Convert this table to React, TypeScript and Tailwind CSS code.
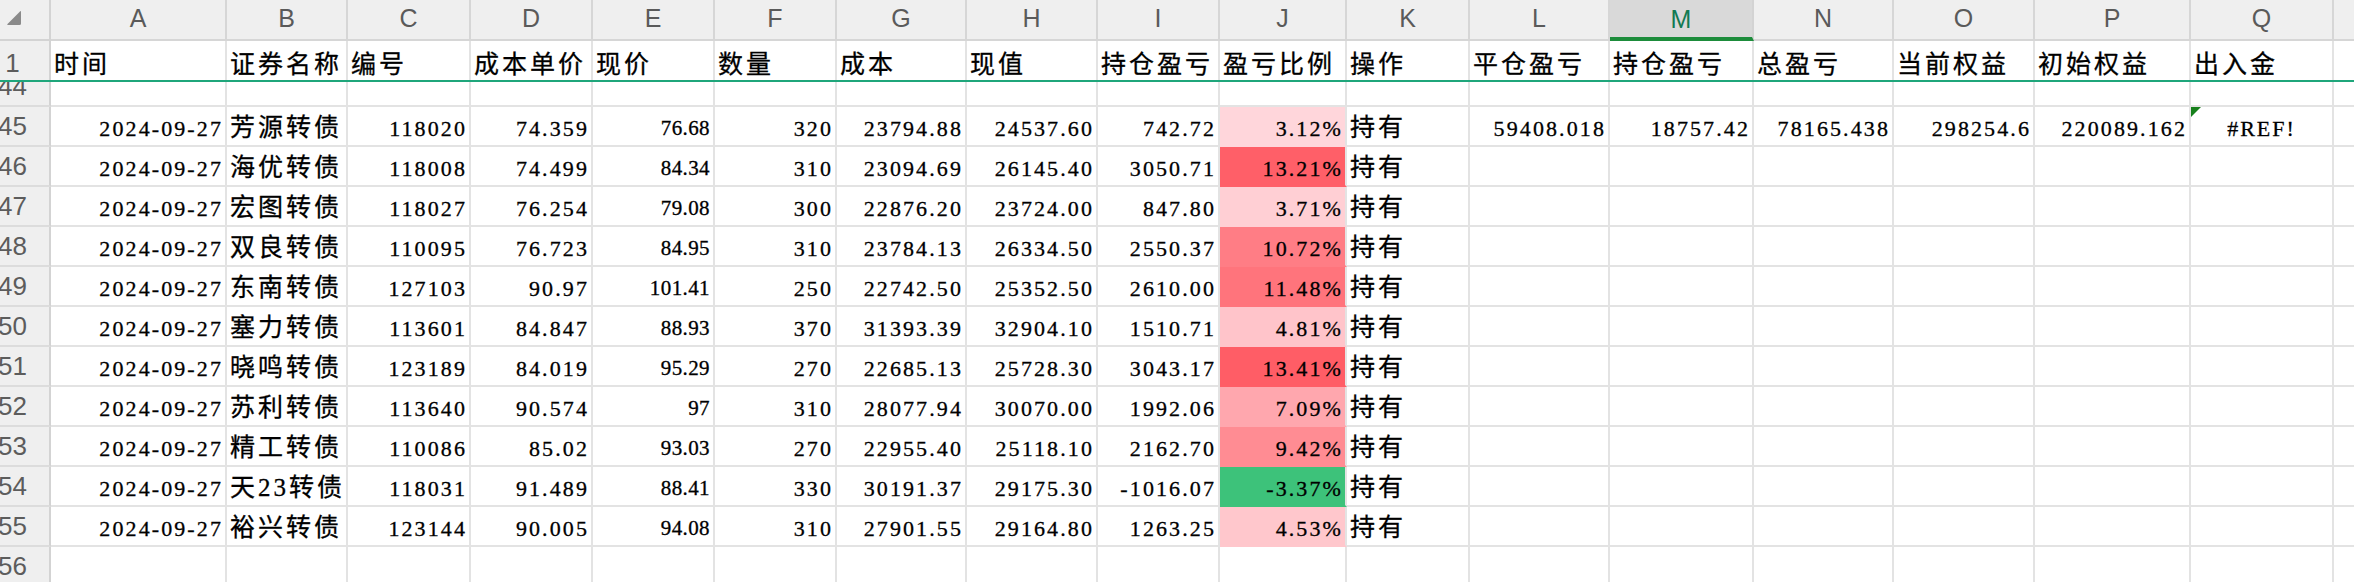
import React from "react";

const W = [
  "w-[51px]",
  "w-[176px]",
  "w-[121px]",
  "w-[123px]",
  "w-[122px]",
  "w-[122px]",
  "w-[122px]",
  "w-[130px]",
  "w-[131px]",
  "w-[122px]",
  "w-[127px]",
  "w-[123px]",
  "w-[140px]",
  "w-[144px]",
  "w-[140px]",
  "w-[141px]",
  "w-[156px]",
  "w-[143px]",
  "w-[40px]",
];

const LETTERS = ["A", "B", "C", "D", "E", "F", "G", "H", "I", "J", "K", "L", "M", "N", "O", "P", "Q", ""];

const HEADERS = [
  "时间",
  "证券名称",
  "编号",
  "成本单价",
  "现价",
  "数量",
  "成本",
  "现值",
  "持仓盈亏",
  "盈亏比例",
  "操作",
  "平仓盈亏",
  "持仓盈亏",
  "总盈亏",
  "当前权益",
  "初始权益",
  "出入金",
  "",
];

type Row = { n: number; d: string[]; bg: string };

const ROWS: Row[] = [
  { n: 45, d: ["2024-09-27", "芳源转债", "118020", "74.359", "76.68", "320", "23794.88", "24537.60", "742.72", "3.12%", "持有"], bg: "bg-[#ffd6db] border-b-[#ffd6db]" },
  { n: 46, d: ["2024-09-27", "海优转债", "118008", "74.499", "84.34", "310", "23094.69", "26145.40", "3050.71", "13.21%", "持有"], bg: "bg-[#ff5f68] border-b-[#ff5f68]" },
  { n: 47, d: ["2024-09-27", "宏图转债", "118027", "76.254", "79.08", "300", "22876.20", "23724.00", "847.80", "3.71%", "持有"], bg: "bg-[#ffcfd4] border-b-[#ffcfd4]" },
  { n: 48, d: ["2024-09-27", "双良转债", "110095", "76.723", "84.95", "310", "23784.13", "26334.50", "2550.37", "10.72%", "持有"], bg: "bg-[#ff7d85] border-b-[#ff7d85]" },
  { n: 49, d: ["2024-09-27", "东南转债", "127103", "90.97", "101.41", "250", "22742.50", "25352.50", "2610.00", "11.48%", "持有"], bg: "bg-[#ff747c] border-b-[#ff747c]" },
  { n: 50, d: ["2024-09-27", "塞力转债", "113601", "84.847", "88.93", "370", "31393.39", "32904.10", "1510.71", "4.81%", "持有"], bg: "bg-[#ffc4ca] border-b-[#ffc4ca]" },
  { n: 51, d: ["2024-09-27", "晓鸣转债", "123189", "84.019", "95.29", "270", "22685.13", "25728.30", "3043.17", "13.41%", "持有"], bg: "bg-[#ff5d66] border-b-[#ff5d66]" },
  { n: 52, d: ["2024-09-27", "苏利转债", "113640", "90.574", "97", "310", "28077.94", "30070.00", "1992.06", "7.09%", "持有"], bg: "bg-[#ffa7ae] border-b-[#ffa7ae]" },
  { n: 53, d: ["2024-09-27", "精工转债", "110086", "85.02", "93.03", "270", "22955.40", "25118.10", "2162.70", "9.42%", "持有"], bg: "bg-[#ff8c93] border-b-[#ff8c93]" },
  { n: 54, d: ["2024-09-27", "天23转债", "118031", "91.489", "88.41", "330", "30191.37", "29175.30", "-1016.07", "-3.37%", "持有"], bg: "bg-[#3dc27a] border-b-[#3dc27a]" },
  { n: 55, d: ["2024-09-27", "裕兴转债", "123144", "90.005", "94.08", "310", "27901.55", "29164.80", "1263.25", "4.53%", "持有"], bg: "bg-[#ffc7cc] border-b-[#ffc7cc]" },
];

const EXTRA = ["59408.018", "18757.42", "78165.438", "298254.6", "220089.162"];

const serif = "font-['Liberation_Serif','Noto_Sans_CJK_SC',serif] text-black [-webkit-text-stroke:0.3px_#000]";
const num = "text-[22px] tracking-[2.1px] justify-end pr-[2px] pt-[5px]";
const numE = "text-[21px] tracking-[0.4px] justify-end pr-[3px] pt-[5px]";
const cjk = "text-[25px] tracking-[3px] justify-start pl-[3px] pt-[2px]";
const grid = "border-r-2 border-b-2 border-[#e3e3e3]";

function RowHead({ n }: { n: number | string }) {
  return (
    <div className={`${W[0]} shrink-0 h-full bg-[#efefef] border-r-2 border-b-2 border-r-[#d3d3d3] border-b-[#dcdcdc] relative`}>
      <div className="absolute left-0 top-0 h-full w-[25px] flex items-center justify-center overflow-visible">
        <span className="font-['Liberation_Sans',Arial,sans-serif] text-[26px] leading-none text-[#5c5c5c] whitespace-nowrap">{n}</span>
      </div>
    </div>
  );
}

function EmptyCell({ i, cls = "" }: { i: number; cls?: string }) {
  return <div className={`${W[i]} shrink-0 h-full ${grid} ${cls}`} />;
}

export default function App() {
  return (
    <div className="w-[2354px] h-[582px] overflow-hidden bg-white">
      {/* column letters */}
      <div className="flex h-[41px]">
        <div className={`${W[0]} shrink-0 h-full bg-[#efefef] border-r-2 border-b-2 border-[#d3d3d3] relative`}>
          <svg className="absolute left-[5px] top-[9px]" width="17" height="17" viewBox="0 0 17 17">
            <path d="M15 2.5 Q16 1.5 16 3 L16 14.5 Q16 16 14.5 16 L3 16 Q1.5 16 2.5 15 Z" fill="#8a8a8a" />
          </svg>
        </div>
        {LETTERS.map((l, i) => {
          const active = l === "M";
          return (
            <div
              key={i}
              className={
                active
                  ? `${W[i + 1]} shrink-0 h-full bg-[#d9d9d9] border-r-2 border-r-[#d3d3d3] border-b-4 border-b-[#1d8c3b] flex items-center justify-center pt-[1px]`
                  : `${W[i + 1]} shrink-0 h-full bg-[#efefef] border-r-2 border-b-2 border-[#d6d6d6] flex items-center justify-center pb-[3px]`
              }
            >
              <span
                className={
                  active
                    ? "font-['Liberation_Sans',Arial,sans-serif] text-[25px] leading-none text-[#127a52]"
                    : "font-['Liberation_Sans',Arial,sans-serif] text-[25px] leading-none text-[#5a5a5a]"
                }
              >
                {l}
              </span>
            </div>
          );
        })}
      </div>

      {/* row 1 headers */}
      <div className="flex h-[39px]">
        <div className={`${W[0]} shrink-0 h-full bg-[#efefef] border-r-2 border-r-[#d3d3d3] relative`}>
          <div className="absolute left-0 top-0 h-full w-[25px] flex items-center justify-center pt-[4px]">
            <span className="font-['Liberation_Sans',Arial,sans-serif] text-[26px] leading-none text-[#5c5c5c]">1</span>
          </div>
        </div>
        {HEADERS.map((h, i) => (
          <div key={i} className={`${W[i + 1]} shrink-0 h-full border-r-2 border-[#e3e3e3] flex items-center ${serif} text-[25px] tracking-[3px] leading-none justify-start pl-[3px] pt-[7px] whitespace-nowrap overflow-hidden`}>
            {h}
          </div>
        ))}
      </div>

      {/* frozen pane divider */}
      <div className="h-[2px] bg-[#1fa67b]" />

      {/* row 44 partially hidden */}
      <div className="h-[25px] overflow-hidden">
        <div className="flex h-[40px] mt-[-15px]">
          <RowHead n={44} />
          {LETTERS.map((_, i) => (
            <EmptyCell key={i} i={i + 1} />
          ))}
        </div>
      </div>

      {/* data rows */}
      {ROWS.map((r, ri) => (
        <div key={r.n} className="flex h-[40px]">
          <RowHead n={r.n} />
          {r.d.map((v, i) => {
            const isCjk = i === 1 || i === 10;
            if (i === 9) {
              return (
                <div key={i} className={`${W[i + 1]} shrink-0 h-full border-r-2 border-b-2 border-r-[#e3e3e3] ${r.bg} flex items-center ${serif} ${num} leading-none whitespace-nowrap`}>
                  {v}
                </div>
              );
            }
            const style = isCjk ? cjk : i === 4 ? numE : num;
            return (
              <div key={i} className={`${W[i + 1]} shrink-0 h-full ${grid} flex items-center ${serif} ${style} leading-none whitespace-nowrap`}>
                {v}
              </div>
            );
          })}
          {ri === 0 ? (
            <>
              {EXTRA.map((v, k) => (
                <div key={k} className={`${W[12 + k]} shrink-0 h-full ${grid} flex items-center ${serif} ${num} leading-none whitespace-nowrap`}>
                  {v}
                </div>
              ))}
              <div className={`${W[17]} shrink-0 h-full ${grid} relative flex items-center justify-center ${serif} text-[22px] tracking-[2px] leading-none pt-[5px]`}>
                <div className="absolute left-0 top-0 w-0 h-0 border-t-[10px] border-t-[#17801c] border-r-[10px] border-r-transparent" />
                #REF!
              </div>
              <EmptyCell i={18} />
            </>
          ) : (
            [12, 13, 14, 15, 16, 17, 18].map((i) => <EmptyCell key={i} i={i} />)
          )}
        </div>
      ))}

      {/* row 56 */}
      <div className="flex h-[40px]">
        <RowHead n={56} />
        {LETTERS.map((_, i) => (
          <EmptyCell key={i} i={i + 1} />
        ))}
      </div>
    </div>
  );
}
